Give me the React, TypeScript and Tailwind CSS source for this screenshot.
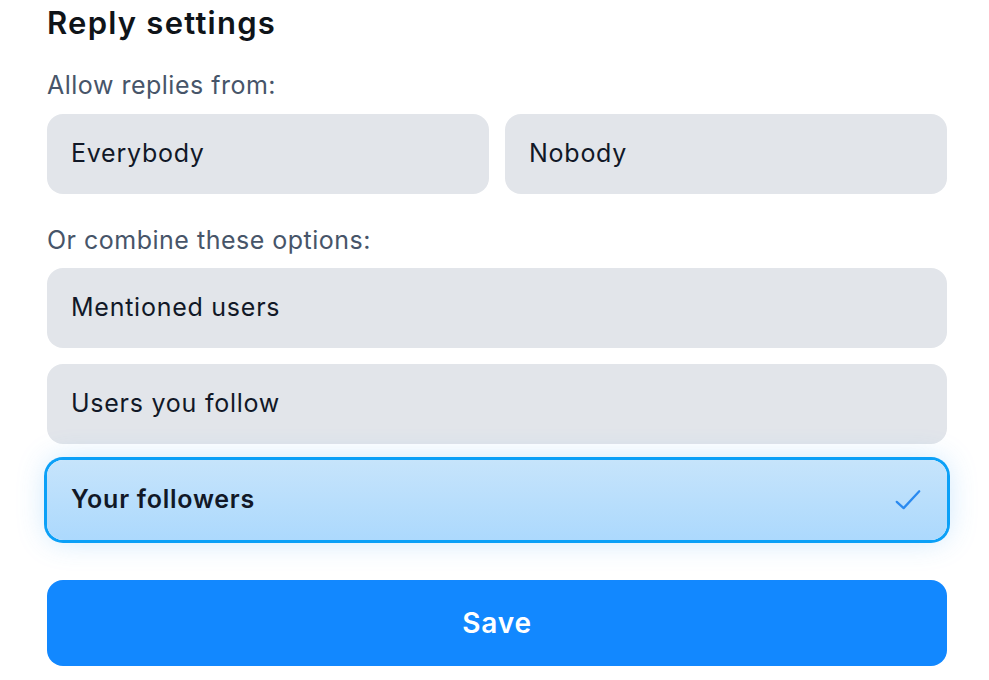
import { useState } from "react";

const Option = ({
  label,
  selected,
  onClick,
}: {
  label: string;
  selected?: boolean;
  onClick?: () => void;
}) => (
  <button
    onClick={onClick}
    className={`flex h-[80px] items-center justify-between rounded-2xl px-6 text-left text-[25px] tracking-[0.03em] text-[#111827] ${
      selected
        ? "bg-gradient-to-b from-[#c6e4fb] to-[#acd9fd] font-semibold shadow-[0_0_0_3px_#0ba0f7,0_0_30px_rgba(56,160,245,0.28)]"
        : "bg-[#e2e5ea]"
    }`}
  >
    <span>{label}</span>
    {selected && (
      <svg width="30" height="30" viewBox="0 0 24 24" fill="none" stroke="#2a8af0" strokeWidth="1.8" strokeLinecap="round" strokeLinejoin="round">
        <path d="M3 13.5l5.5 5L21 5" />
      </svg>
    )}
  </button>
);

const App = () => {
  const [picked, setPicked] = useState<string>("Your followers");

  return (
    <div className="min-h-screen bg-white px-[47px] pt-[4px]" style={{ fontFamily: "Inter, 'Noto Sans', sans-serif" }}>
      <div className="flex w-[900px] flex-col">
        <h1 className="text-[31px] font-semibold leading-[38px] tracking-[0.04em] text-[#0f1419]">Reply settings</h1>
        <p className="mt-[27px] text-[25px] leading-[32px] tracking-[0.02em] text-[#475569]">Allow replies from:</p>
        <div className="mt-[13px] grid grid-cols-2 gap-4">
          <Option label="Everybody" />
          <Option label="Nobody" />
        </div>
        <p className="mt-[30px] text-[25px] leading-[32px] tracking-[0.02em] text-[#475569]">Or combine these options:</p>
        <div className="mt-[12px] flex flex-col gap-4">
          {["Mentioned users", "Users you follow", "Your followers"].map((o) => (
            <Option key={o} label={o} selected={picked === o} onClick={() => setPicked(o)} />
          ))}
        </div>
        <button className="mt-[40px] h-[86px] w-full rounded-2xl bg-[#1288ff] text-[28px] font-semibold tracking-[0.03em] text-white">
          Save
        </button>
      </div>
    </div>
  );
};

export default App;
